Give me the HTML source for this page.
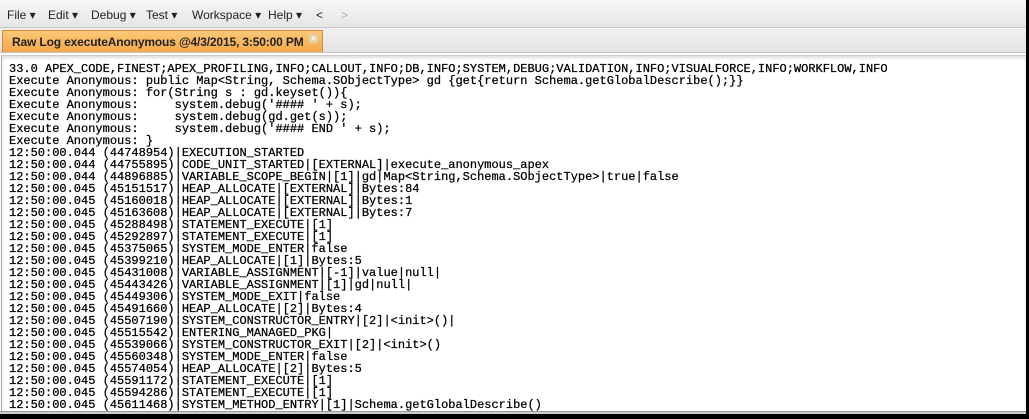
<!DOCTYPE html>
<html><head><style>
html,body{margin:0;padding:0}
body{width:1029px;height:419px;overflow:hidden;background:#000;position:relative;font-family:"Liberation Sans",Arial,sans-serif}
#app{position:absolute;left:0;top:0;width:1026px;height:414px;background:#fff;overflow:hidden}
#menu{position:absolute;left:0;top:0;width:1026px;height:27px;background:linear-gradient(#f6f6f6,#e6e6e6);border-bottom:1px solid #c8c8c8;font-size:12px;color:#222}
#menu span{position:absolute;top:8px}
#tabs{position:absolute;left:0;top:28px;width:1026px;height:24px;background:linear-gradient(#f0f0f0,#e4e4e4);border-bottom:1px solid #c0c0c0}
#tab{position:absolute;left:2px;top:2px;width:321px;height:22px;background:linear-gradient(#fbc878,#f5a94a);border:1px solid #d08a30;border-bottom:none;box-sizing:border-box;font-size:12px;font-weight:bold;color:#222;padding:4px 0 0 9px;letter-spacing:-0.15px}
#tab i{position:absolute;right:4px;top:3px;width:9px;height:9px;background:#e6d0b0;border-radius:2px;font-style:normal;font-size:8px;color:#fff;line-height:9px;text-align:center}
#log{position:absolute;left:1px;top:55px;width:1024px;height:358px;border-top:1px solid #ccc;border-left:1px solid #aaa;box-shadow:inset 0 2px 3px #ddd}
pre{margin:0;position:absolute;left:7px;top:7px;font-family:"Liberation Mono","Courier New",monospace;font-size:12px;line-height:12px;color:#000;-webkit-text-stroke:0.25px #000}
#bot{position:absolute;left:0;top:411px;width:1026px;height:3px;background:#ccc;border-top:1px solid #999}
</style></head><body>
<div id="app">
<div id="menu"><span style="left:7px">File ▾</span><span style="left:48px">Edit ▾</span><span style="left:91px">Debug ▾</span><span style="left:146px">Test ▾</span><span style="left:192px">Workspace ▾</span><span style="left:268px">Help ▾</span><span style="left:316px">&lt;</span><span style="left:341px;color:#aaa">&gt;</span></div>
<div id="tabs"><div id="tab">Raw Log executeAnonymous @4/3/2015, 3:50:00 PM<i>×</i></div></div>
<div id="log"><pre>33.0 APEX_CODE,FINEST;APEX_PROFILING,INFO;CALLOUT,INFO;DB,INFO;SYSTEM,DEBUG;VALIDATION,INFO;VISUALFORCE,INFO;WORKFLOW,INFO
Execute Anonymous: public Map&lt;String, Schema.SObjectType&gt; gd {get{return Schema.getGlobalDescribe();}}
Execute Anonymous: for(String s : gd.keyset()){
Execute Anonymous:     system.debug('#### ' + s);
Execute Anonymous:     system.debug(gd.get(s));
Execute Anonymous:     system.debug('#### END ' + s);
Execute Anonymous: }
12:50:00.044 (44748954)|EXECUTION_STARTED
12:50:00.044 (44755895)|CODE_UNIT_STARTED|[EXTERNAL]|execute_anonymous_apex
12:50:00.044 (44896885)|VARIABLE_SCOPE_BEGIN|[1]|gd|Map&lt;String,Schema.SObjectType&gt;|true|false
12:50:00.045 (45151517)|HEAP_ALLOCATE|[EXTERNAL]|Bytes:84
12:50:00.045 (45160018)|HEAP_ALLOCATE|[EXTERNAL]|Bytes:1
12:50:00.045 (45163608)|HEAP_ALLOCATE|[EXTERNAL]|Bytes:7
12:50:00.045 (45288498)|STATEMENT_EXECUTE|[1]
12:50:00.045 (45292897)|STATEMENT_EXECUTE|[1]
12:50:00.045 (45375065)|SYSTEM_MODE_ENTER|false
12:50:00.045 (45399210)|HEAP_ALLOCATE|[1]|Bytes:5
12:50:00.045 (45431008)|VARIABLE_ASSIGNMENT|[-1]|value|null|
12:50:00.045 (45443426)|VARIABLE_ASSIGNMENT|[1]|gd|null|
12:50:00.045 (45449306)|SYSTEM_MODE_EXIT|false
12:50:00.045 (45491660)|HEAP_ALLOCATE|[2]|Bytes:4
12:50:00.045 (45507190)|SYSTEM_CONSTRUCTOR_ENTRY|[2]|&lt;init&gt;()|
12:50:00.045 (45515542)|ENTERING_MANAGED_PKG|
12:50:00.045 (45539066)|SYSTEM_CONSTRUCTOR_EXIT|[2]|&lt;init&gt;()
12:50:00.045 (45560348)|SYSTEM_MODE_ENTER|false
12:50:00.045 (45574054)|HEAP_ALLOCATE|[2]|Bytes:5
12:50:00.045 (45591172)|STATEMENT_EXECUTE|[1]
12:50:00.045 (45594286)|STATEMENT_EXECUTE|[1]
12:50:00.045 (45611468)|SYSTEM_METHOD_ENTRY|[1]|Schema.getGlobalDescribe()
12:50:00.045 (45619371)|ENTERING_MANAGED_PKG|</pre></div>
<div id="bot"></div>
</div>
</body></html>
